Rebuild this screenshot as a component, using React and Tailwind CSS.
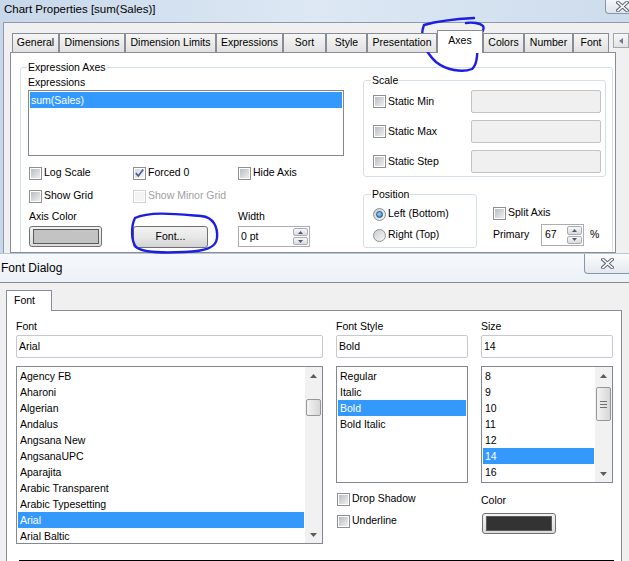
import React from 'react'

const chartTabs = [
  { label: 'General', w: 'w-[47px]' },
  { label: 'Dimensions', w: 'w-[66px]' },
  { label: 'Dimension Limits', w: 'w-[91px]' },
  { label: 'Expressions', w: 'w-[67px]' },
  { label: 'Sort', w: 'w-[43px]' },
  { label: 'Style', w: 'w-[41px]' },
  { label: 'Presentation', w: 'w-[70px]' },
  { label: 'Axes', w: 'w-[46px]', active: true },
  { label: 'Colors', w: 'w-[41px]' },
  { label: 'Number', w: 'w-[49px]' },
  { label: 'Font', w: 'w-[36px]' },
]

const fonts = [
  'Agency FB', 'Aharoni', 'Algerian', 'Andalus', 'Angsana New', 'AngsanaUPC',
  'Aparajita', 'Arabic Transparent', 'Arabic Typesetting', 'Arial', 'Arial Baltic',
]
const styles = ['Regular', 'Italic', 'Bold', 'Bold Italic']
const sizes = ['8', '9', '10', '11', '12', '14', '16']

const CloseGlyph = () => (
  <svg width="13" height="11" viewBox="0 0 13 11">
    <path d="M2 1.5 L11 9.5 M11 1.5 L2 9.5" stroke="#5b6371" strokeWidth="3.6" strokeLinecap="square" />
    <path d="M2 1.5 L11 9.5 M11 1.5 L2 9.5" stroke="#ffffff" strokeWidth="1.6" strokeLinecap="square" />
  </svg>
)

const CheckBox = ({ checked = false, disabled = false }) => (
  <span className={`flex h-[13px] w-[13px] shrink-0 items-center justify-center border bg-white ${disabled ? 'border-[#d2d2d2]' : 'border-[#8e8f8f]'}`}>
    <span className={`flex h-[9px] w-[9px] items-center justify-center ${disabled ? 'bg-[#f4f4f4]' : checked ? 'bg-gradient-to-br from-[#d6dade] to-[#f7f8f9]' : 'bg-gradient-to-br from-[#b9bdc2] to-[#efeff0]'}`}>
      {checked && (
        <svg width="9" height="9" viewBox="0 0 9 9" className="overflow-visible">
          <path d="M0.8 4.2 L3.3 6.9 L8.2 0.6" fill="none" stroke="#4a5f98" strokeWidth="1.7" />
        </svg>
      )}
    </span>
  </span>
)

const Radio = ({ checked = false }) => (
  <span className="flex h-[13px] w-[13px] shrink-0 items-center justify-center rounded-full border border-[#8e8f8f] bg-gradient-to-br from-[#c9ccd0] to-[#f8f8f8]">
    {checked && (
      <span className="h-[7px] w-[7px] rounded-full border border-[#1d4f7c] bg-[radial-gradient(circle_at_40%_35%,#9ad6ff,#2a78bd)]" />
    )}
  </span>
)

const Option = ({ children, checked, disabled, radio }) => (
  <div className="flex h-[16px] items-center gap-[2px]">
    {radio ? <Radio checked={checked} /> : <CheckBox checked={checked} disabled={disabled} />}
    <span className={`whitespace-nowrap ${disabled ? 'text-[#a0a0a0]' : ''}`}>{children}</span>
  </div>
)

const SpinButtons = () => (
  <div className="flex h-full w-[16px] flex-col gap-[1px] py-[1px] pr-[1px]">
    {['up', 'down'].map((dir) => (
      <span key={dir} className="flex flex-1 items-center justify-center rounded-[2px] border border-[#a9aeb5] bg-gradient-to-b from-[#f8f8f8] to-[#dadada]">
        <svg width="5" height="3" viewBox="0 0 5 3">
          <path d={dir === 'up' ? 'M0 3L2.5 0L5 3Z' : 'M0 0L2.5 3L5 0Z'} fill="#4b5b7a" />
        </svg>
      </span>
    ))}
  </div>
)

const SpinBox = ({ value, className }) => (
  <div className={`flex border border-[#abadb3] bg-white ${className}`}>
    <span className="flex flex-1 items-center pl-[2px]">{value}</span>
    <SpinButtons />
  </div>
)

const ColorSwatch = ({ fill, className }) => (
  <div className={`flex items-center justify-center rounded-[3px] border border-[#707070] bg-gradient-to-b from-[#f2f2f2] to-[#dcdcdc] ${className}`}>
    <span className={`h-[15px] w-[66px] border border-[#5a5a5a] ${fill}`} />
  </div>
)

const Arrow = ({ up }) => (
  <span className="flex h-[17px] items-center justify-center">
    <svg width="7" height="4" viewBox="0 0 7 4">
      <path d={up ? 'M0 4L3.5 0L7 4Z' : 'M0 0L3.5 4L7 0Z'} fill="#5c5c5c" />
    </svg>
  </span>
)

const ScrollBar = ({ thumbClass, grip }) => (
  <div className="flex w-[17px] shrink-0 flex-col bg-[#f1f1f1]">
    <Arrow up />
    <span className={`mx-auto flex w-[15px] flex-col items-center justify-center gap-[2px] rounded-[2px] border border-[#979797] bg-gradient-to-r from-[#f4f4f4] to-[#d6d6d6] ${thumbClass}`}>
      {grip && [0, 1, 2].map((i) => <span key={i} className="h-[1px] w-[7px] bg-[#707070]" />)}
    </span>
    <span className="flex-1" />
    <Arrow />
  </div>
)

const ListBox = ({ items, selected, className, scroll }) => (
  <div className={`flex overflow-hidden border border-[#828790] bg-white ${className}`}>
    <div className="flex-1 p-[1px]">
      {items.map((item) => (
        <div
          key={item}
          className={`h-[16px] whitespace-nowrap pl-[2px] leading-[16px] ${item === selected ? 'bg-[#3399ff] text-white' : ''}`}
        >
          {item}
        </div>
      ))}
    </div>
    {scroll}
  </div>
)

const TextBox = ({ value }) => (
  <div className="flex h-[23px] items-center rounded-[2px] border border-[#c5c8ce] bg-white pl-[2px]">{value}</div>
)

const App = () => {
  return (
    <div className="relative h-[561px] w-[629px] overflow-hidden bg-[#f0f0f0] font-['Liberation_Sans',Arial,sans-serif] text-[10.5px] text-black">
      {/* Chart Properties window (behind) */}
      <div className="flex h-[253px] flex-col bg-gradient-to-r from-[#c8d8ea] via-[#dde8f4] to-[#cddcec]">
        <div className="flex h-[22px] shrink-0">
          <span className="self-center pb-[2px] pl-[4px] text-[11.5px]">Chart Properties [sum(Sales)]</span>
          <span className="ml-auto mr-[-10px] flex h-[14px] w-[34px] items-center justify-center rounded-bl-[4px] border border-t-0 border-[#8896a8] bg-gradient-to-b from-[#f4f6f9] to-[#dfe5ec]">
            <CloseGlyph />
          </span>
        </div>

        <div className="ml-[3px] flex flex-1 flex-col overflow-hidden border-l border-t border-[#8d9aab] bg-[#f0f0f0]">
          {/* tab strip */}
          <div className="relative z-10 flex items-end pl-[8px] pt-[7px]">
            {chartTabs.map((tab) => (
              <div
                key={tab.label}
                className={`flex shrink-0 items-center justify-center whitespace-nowrap border border-b-0 border-[#898c95] ${tab.w} ${
                  tab.active ? 'mb-[-1px] h-[23px] bg-white pb-[2px]' : 'h-[19px] bg-gradient-to-b from-[#f6f6f6] to-[#e1e1e1]'
                }`}
              >
                {tab.label}
              </div>
            ))}
            <div className="ml-[4px] flex self-start pt-[3px]">
              {['M4 0L0 3L4 6Z', 'M0 0L4 3L0 6Z'].map((d) => (
                <span key={d} className="flex h-[15px] w-[16px] shrink-0 items-center justify-center border border-[#a3a6ad] bg-gradient-to-b from-[#f7f7f7] to-[#e3e3e3]">
                  <svg width="4" height="6" viewBox="0 0 4 6"><path d={d} fill="#6d7a92" /></svg>
                </span>
              ))}
            </div>
          </div>

          {/* tab panel */}
          <div className="ml-[6px] w-[606px] flex-1 overflow-hidden border border-[#898c95] bg-white">
            <fieldset className="ml-[9px] mt-[8px] w-[593px] rounded-[3px] border border-[#d5dfe5] pb-[12px]">
              <legend className="ml-[6px] px-[1px] leading-[12px]">Expression Axes</legend>
              <div className="flex pl-[7px]">
                {/* left column */}
                <div className="w-[316px] shrink-0">
                  <div className="mt-[3px] leading-[12px]">Expressions</div>
                  <div className="mt-[2px] h-[66px] border border-[#828790] bg-white p-[1px]">
                    <div className="h-[16px] bg-[#3399ff] pl-[1px] leading-[16px] text-white">sum(Sales)</div>
                  </div>

                  <div className="mt-[9px] flex">
                    <div className="w-[104px] pl-[1px]"><Option>Log Scale</Option></div>
                    <div className="w-[105px] pl-[1px]"><Option checked>Forced 0</Option></div>
                    <div className="pl-[1px]"><Option>Hide Axis</Option></div>
                  </div>
                  <div className="mt-[7px] flex">
                    <div className="w-[104px] pl-[1px]"><Option>Show Grid</Option></div>
                    <div className="w-[105px] pl-[1px]"><Option disabled>Show Minor Grid</Option></div>
                  </div>

                  <div className="mt-[6px] flex leading-[12px]">
                    <div className="w-[209px] pl-[1px]">Axis Color</div>
                    <div className="pl-[1px]">Width</div>
                  </div>
                  <div className="mt-[4px] flex items-start">
                    <div className="w-[104px] pl-[1px]">
                      <ColorSwatch fill="bg-[#c3c3c3]" className="h-[21px] w-[73px]" />
                    </div>
                    <div className="w-[105px] pl-[1px]">
                      <button className="flex h-[22px] w-[75px] items-center justify-center rounded-[3px] border border-[#707070] bg-gradient-to-b from-[#f3f3f3] via-[#e8e8e8] to-[#d3d3d3]">
                        Font...
                      </button>
                    </div>
                    <div className="pl-[1px]">
                      <SpinBox value="0 pt" className="h-[21px] w-[72px]" />
                    </div>
                  </div>
                </div>

                {/* right column */}
                <div className="ml-[19px] w-[243px] shrink-0">
                  <fieldset className="mt-[1px] w-[243px] rounded-[3px] border border-[#d5dfe5]">
                    <legend className="ml-[7px] px-[1px] leading-[12px]">Scale</legend>
                    <div className="flex flex-col gap-[7px] pb-[3px] pl-[9px] pr-[4px] pt-[4px]">
                      {['Static Min', 'Static Max', 'Static Step'].map((label) => (
                        <div key={label} className="flex h-[23px] items-center">
                          <div className="flex-1"><Option>{label}</Option></div>
                          <div className="h-[23px] w-[130px] rounded-[2px] border border-[#c3c3c3] bg-[#f0f0f0]" />
                        </div>
                      ))}
                    </div>
                  </fieldset>

                  <div className="mt-[11px] flex items-start">
                    <fieldset className="w-[114px] shrink-0 rounded-[3px] border border-[#d5dfe5]">
                      <legend className="ml-[7px] px-[1px] leading-[12px]">Position</legend>
                      <div className="flex flex-col gap-[5px] pb-[4px] pl-[9px] pt-[6px]">
                        <Option radio checked>Left (Bottom)</Option>
                        <Option radio>Right (Top)</Option>
                      </div>
                    </fieldset>
                    <div className="ml-[16px] pt-[17px]">
                      <Option>Split Axis</Option>
                      <div className="mt-[3px] flex h-[22px] items-center">
                        <span className="w-[48px]">Primary</span>
                        <SpinBox value={<span className="pl-[1px]">67</span>} className="h-[22px] w-[43px]" />
                        <span className="ml-[6px]">%</span>
                      </div>
                    </div>
                  </div>
                </div>
              </div>
            </fieldset>
          </div>
        </div>
      </div>

      {/* Font Dialog window (front) */}
      <div className="flex h-[308px] flex-col">
        <div className="flex h-[30px] shrink-0 border-b border-t border-b-[#8b8b8b] border-t-[#b9c6d6] bg-gradient-to-b from-[#f6f9fc] to-[#ecf1f7]">
          <span className="self-center pl-[1px] text-[12px]">Font Dialog</span>
          <span className="ml-auto mr-[-2px] flex h-[20px] w-[47px] items-center justify-center self-start rounded-b-[4px] border border-t-0 border-[#8896a8] bg-gradient-to-b from-[#fbfcfd] to-[#e4e9ef]">
            <CloseGlyph />
          </span>
        </div>

        <div className="flex flex-1 flex-col bg-[#f0f0f0] pt-[7px]">
          <div className="relative z-10 flex h-[20px] items-end pl-[6px]">
            <div className="mb-[-1px] flex h-[21px] w-[46px] items-center border border-b-0 border-[#898c95] bg-white pl-[7px]">Font</div>
          </div>

          <div className="ml-[6px] w-[616px] flex-1 overflow-hidden border border-b-0 border-[#898c95] bg-white">
            <div className="flex gap-[13px] pl-[9px] pt-[9px]">
              {/* font family */}
              <div className="w-[307px] shrink-0">
                <div className="leading-[12px]">Font</div>
                <div className="mt-[3px]"><TextBox value="Arial" /></div>
                <ListBox
                  items={fonts}
                  selected="Arial"
                  className="mt-[8px] h-[178px]"
                  scroll={<ScrollBar thumbClass="mt-[15px] h-[17px]" />}
                />
              </div>

              {/* font style */}
              <div className="w-[132px] shrink-0">
                <div className="leading-[12px]">Font Style</div>
                <div className="mt-[3px]"><TextBox value="Bold" /></div>
                <ListBox items={styles} selected="Bold" className="mt-[8px] h-[117px]" />
                <div className="mt-[8px] pl-[1px]"><Option>Drop Shadow</Option></div>
                <div className="mt-[6px] pl-[1px]"><Option>Underline</Option></div>
              </div>

              {/* size */}
              <div className="w-[132px] shrink-0">
                <div className="leading-[12px]">Size</div>
                <div className="mt-[3px]"><TextBox value="14" /></div>
                <ListBox
                  items={sizes}
                  selected="14"
                  className="mt-[8px] h-[117px]"
                  scroll={<ScrollBar thumbClass="mt-[3px] h-[34px]" grip />}
                />
                <div className="mt-[11px] leading-[12px]">Color</div>
                <div className="ml-[1px] mt-[7px]">
                  <ColorSwatch fill="bg-[#333333]" className="h-[21px] w-[74px]" />
                </div>
              </div>
            </div>
            <div className="ml-[12px] mt-[16px] h-[2px] w-[595px] bg-black" />
          </div>
        </div>
      </div>

      {/* hand-drawn highlight marks */}
      <svg className="pointer-events-none absolute inset-0 h-full w-full" viewBox="0 0 629 561">
        <g fill="none" stroke="#1c1ee0" strokeWidth="2.4" strokeLinecap="round" strokeLinejoin="round">
          <path d="M474 18 C456 19 438 21 424 25 C419 37 425 52 436 62 C446 70 462 73 472 69 C478 64 477 52 478 42 C479 34 486 30 483 26 C480 23 472 22 466 23" />
          <path d="M135 218 C150 211 176 214 201 216 C214 217 218 228 217 238 C216 248 205 251 185 252 C165 253 143 253 136 247 C131 241 131 226 135 218" />
        </g>
      </svg>
    </div>
  )
}

export default App
